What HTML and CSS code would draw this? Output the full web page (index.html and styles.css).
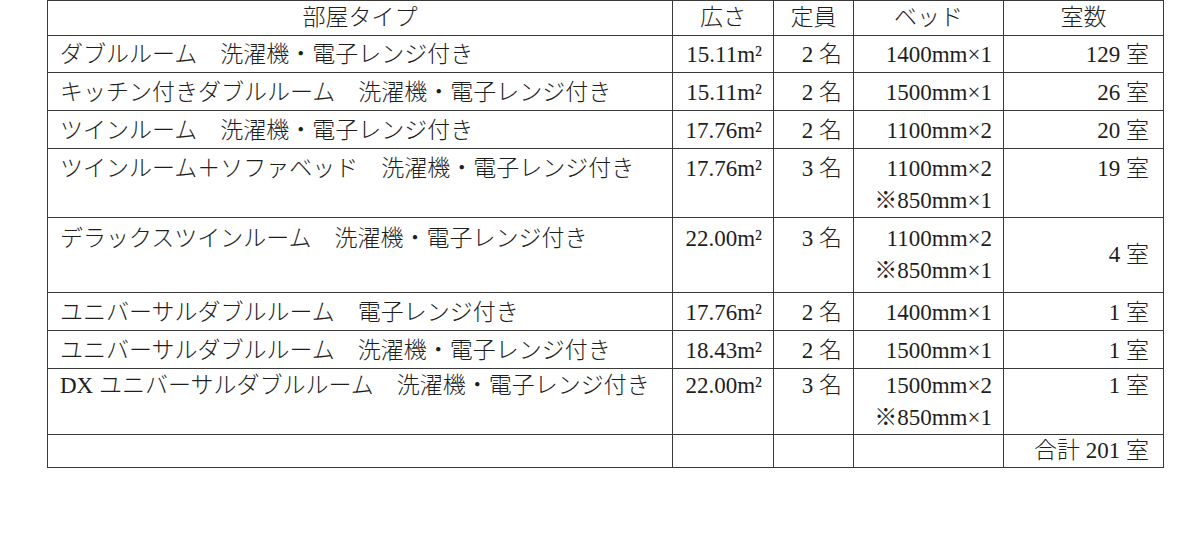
FILE: index.html
```html
<!DOCTYPE html>
<html lang="ja">
<head>
<meta charset="utf-8">
<title>部屋タイプ</title>
<link rel="stylesheet" href="styles.css">
</head>
<body>
<div class="page">
<table class="rooms">
  <colgroup>
    <col class="c-type"><col class="c-area"><col class="c-cap"><col class="c-bed"><col class="c-num">
  </colgroup>
  <thead>
    <tr class="r-head">
      <th>部屋タイプ</th><th>広さ</th><th>定員</th><th>ベッド</th><th>室数</th>
    </tr>
  </thead>
  <tbody>
    <tr class="r-1 first">
      <td class="type">ダブルルーム　洗濯機・電子レンジ付き</td><td class="num">15.11m²</td><td class="num">2 名</td><td class="num">1400mm×1</td><td class="cnt">129 室</td>
    </tr>
    <tr class="r-1">
      <td class="type">キッチン付きダブルルーム　洗濯機・電子レンジ付き</td><td class="num">15.11m²</td><td class="num">2 名</td><td class="num">1500mm×1</td><td class="cnt">26 室</td>
    </tr>
    <tr class="r-1">
      <td class="type">ツインルーム　洗濯機・電子レンジ付き</td><td class="num">17.76m²</td><td class="num">2 名</td><td class="num">1100mm×2</td><td class="cnt">20 室</td>
    </tr>
    <tr class="r-2 top">
      <td class="type">ツインルーム＋ソファベッド　洗濯機・電子レンジ付き</td><td class="num">17.76m²</td><td class="num">3 名</td><td class="num">1100mm×2<br>※850mm×1</td><td class="cnt">19 室</td>
    </tr>
    <tr class="r-2b top">
      <td class="type">デラックスツインルーム　洗濯機・電子レンジ付き</td><td class="num">22.00m²</td><td class="num">3 名</td><td class="num">1100mm×2<br>※850mm×1</td><td class="cnt mid">4 室</td>
    </tr>
    <tr class="r-1">
      <td class="type">ユニバーサルダブルルーム　電子レンジ付き</td><td class="num">17.76m²</td><td class="num">2 名</td><td class="num">1400mm×1</td><td class="cnt">1 室</td>
    </tr>
    <tr class="r-1">
      <td class="type">ユニバーサルダブルルーム　洗濯機・電子レンジ付き</td><td class="num">18.43m²</td><td class="num">2 名</td><td class="num">1500mm×1</td><td class="cnt">1 室</td>
    </tr>
    <tr class="r-2c top">
      <td class="type">DX ユニバーサルダブルルーム　洗濯機・電子レンジ付き</td><td class="num">22.00m²</td><td class="num">3 名</td><td class="num">1500mm×2<br>※850mm×1</td><td class="cnt">1 室</td>
    </tr>
    <tr class="r-total">
      <td></td><td></td><td></td><td></td><td class="cnt">合計 201 室</td>
    </tr>
  </tbody>
</table>
</div>
</body>
</html>
```
FILE: styles.css
```css
html, body {
  margin: 0;
  padding: 0;
  background: #ffffff;
}

.page {
  padding: 0 0 0 47px;
}

.rooms {
  border-collapse: collapse;
  table-layout: fixed;
  width: 1116px;
  font-family: "Liberation Serif", "Noto Sans CJK JP", serif;
  font-weight: 300;
  font-size: 23px;
  line-height: 32px;
  color: #1e1e1e;
}

.c-type { width: 625px; }
.c-area { width: 101px; }
.c-cap { width: 80px; }
.c-bed { width: 150px; }
.c-num { width: 160px; }

.rooms th,
.rooms td {
  border: 1px solid #3a3a3a;
  padding: 0 12px;
  vertical-align: middle;
  white-space: nowrap;
  overflow: hidden;
}

.rooms th {
  font-weight: 300;
  text-align: center;
}

.r-head { height: 35px; }
.r-1 { height: 38px; }
.r-1.first { height: 37px; }
.r-2 { height: 69px; }
.r-2b { height: 75px; }
.r-2c { height: 66px; }
.r-total { height: 30px; }

.r-1 td {
  padding-top: 2px;
}

.top td {
  vertical-align: top;
  padding-top: 4px;
  padding-bottom: 0;
}

.r-2b td {
  padding-top: 5px;
}

.r-2c td {
  padding-top: 1px;
}

.top td.mid {
  vertical-align: middle;
  padding-top: 0;
}

.type {
  text-align: left;
  padding-left: 11px;
}

.num {
  text-align: right;
}

.rooms td.num { padding-right: 11px; }
.rooms td.cnt { padding-right: 14px; text-align: right; }
```
